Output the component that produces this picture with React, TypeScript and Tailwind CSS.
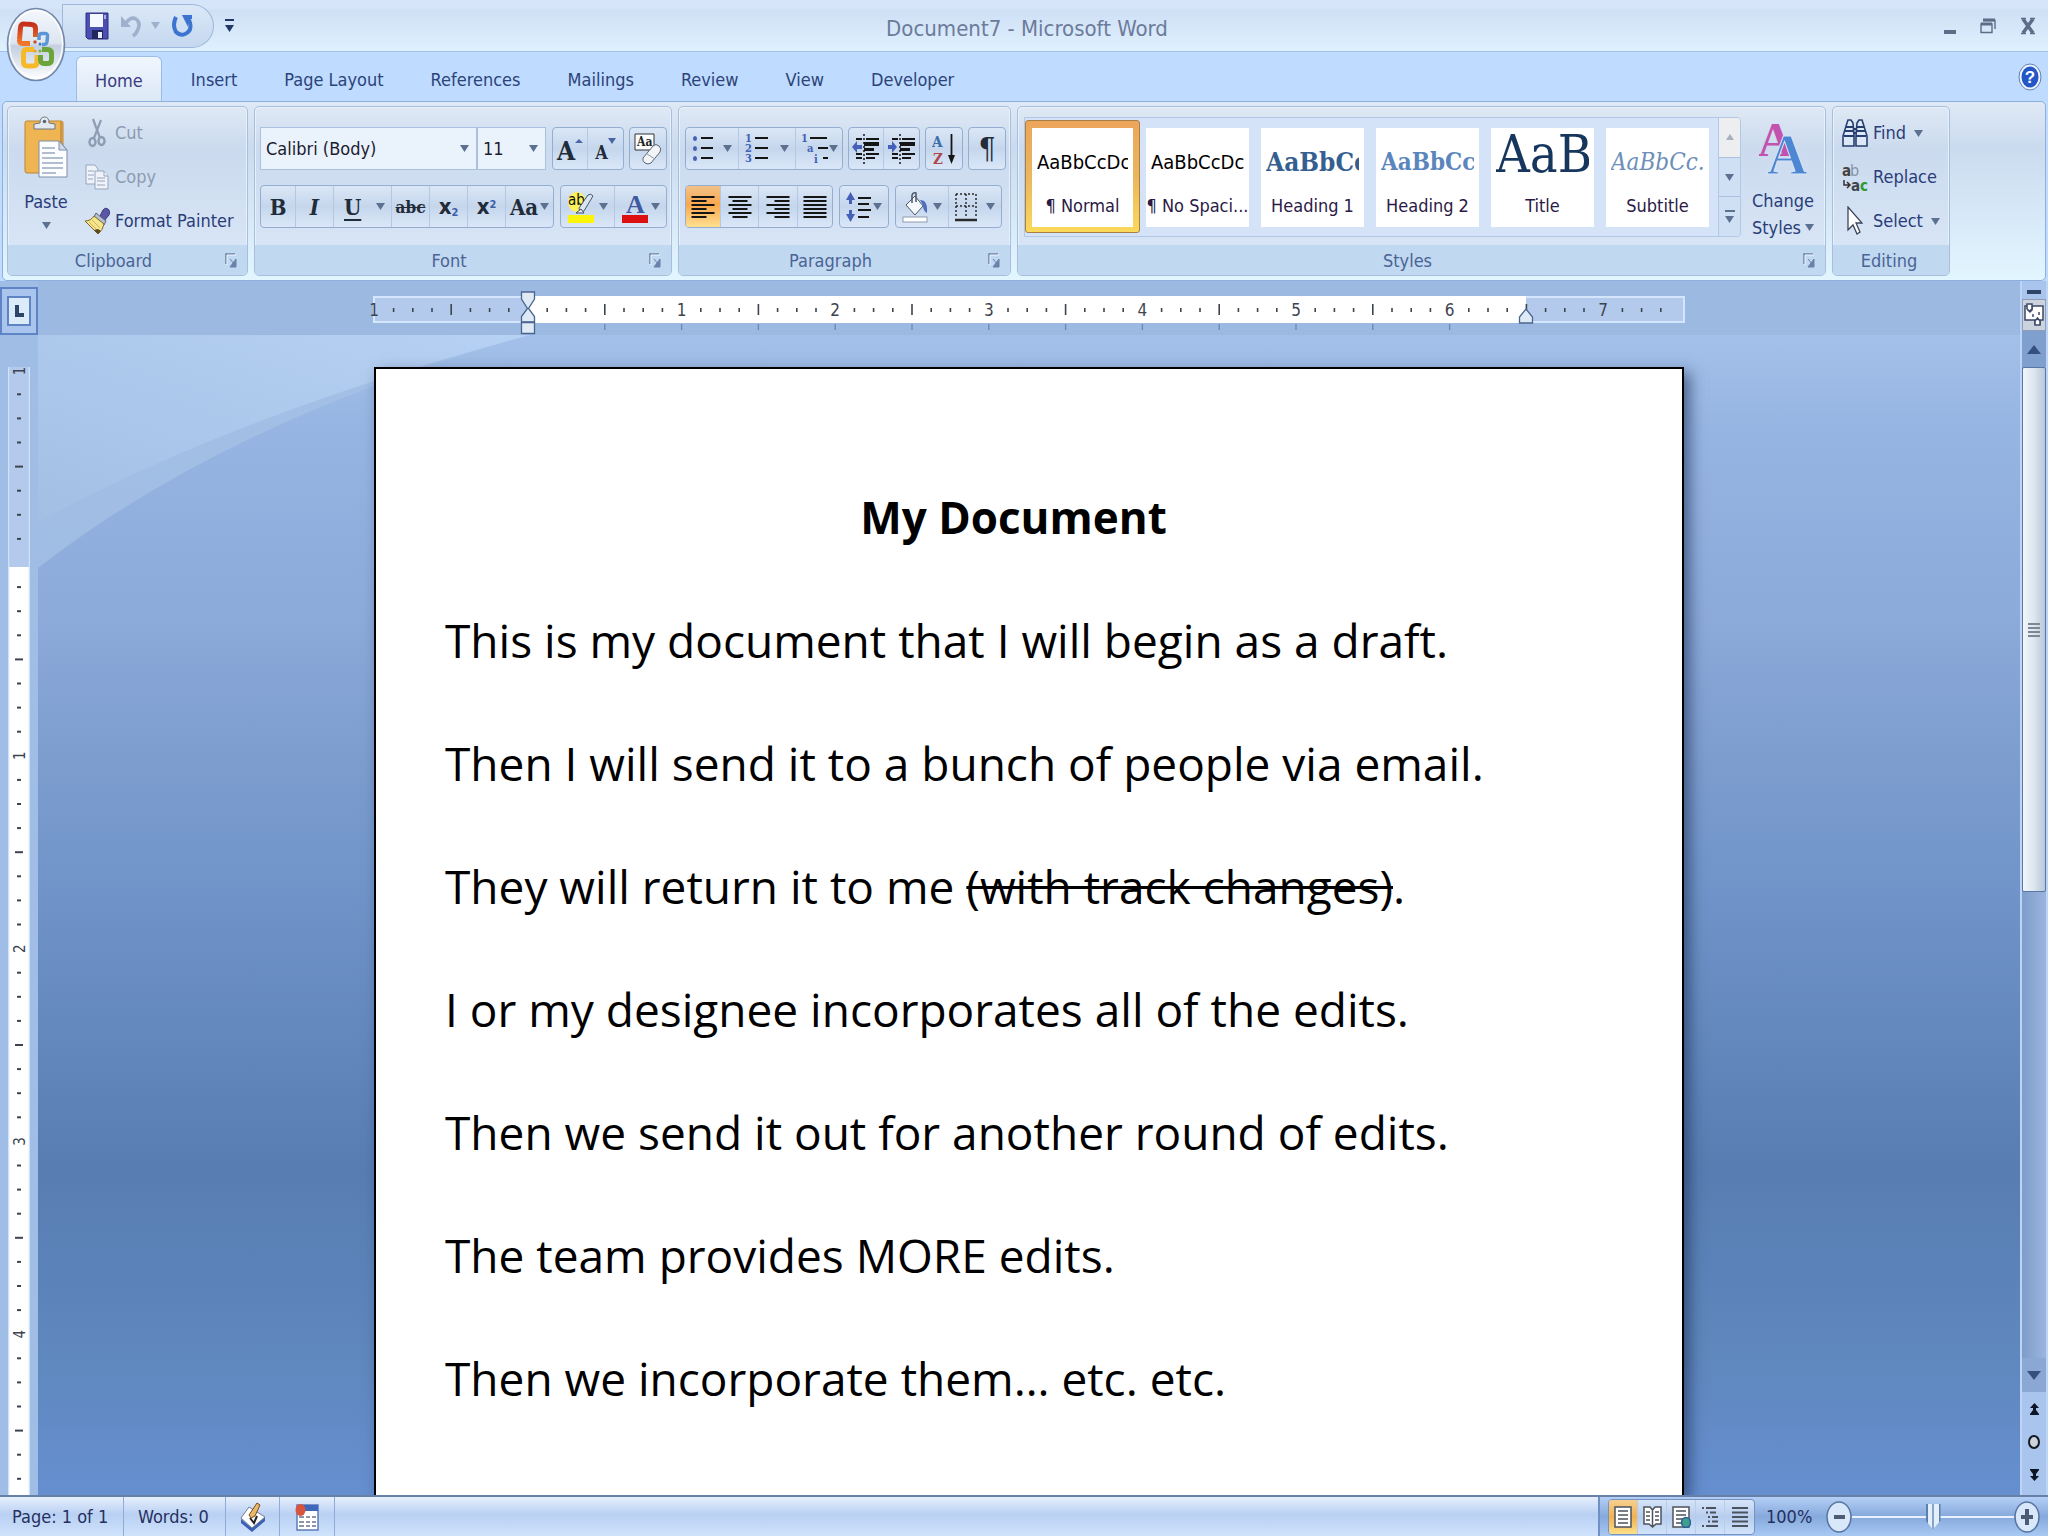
import { useState } from 'react';
import type { ReactNode } from 'react';
import clsx from 'clsx';

const TABS = ['Home', 'Insert', 'Page Layout', 'References', 'Mailings', 'Review', 'View', 'Developer'];

const PARAGRAPHS = [
  'This is my document that I will begin as a draft.',
  'Then I will send it to a bunch of people via email.',
  null,
  'I or my designee incorporates all of the edits.',
  'Then we send it out for another round of edits.',
  'The team provides MORE edits.',
  'Then we incorporate them… etc. etc.',
];

const STYLES = [
  { name: '¶ Normal', sample: 'AaBbCcDc', look: 'text-[20px] text-black' },
  { name: '¶ No Spaci...', sample: 'AaBbCcDc', look: 'text-[20px] text-black' },
  { name: 'Heading 1', sample: 'AaBbCc', look: 'text-[26px] font-bold text-[#365f91]' },
  { name: 'Heading 2', sample: 'AaBbCc', look: 'text-[24px] font-bold text-[#5b86bd]' },
  { name: 'Title', sample: 'AaB', look: 'text-[52px] text-[#17365d]' },
  { name: 'Subtitle', sample: 'AaBbCc.', look: 'text-[24px] italic text-[#6d8fb8]' },
];

const SERIF = "font-['DejaVu_Serif_Condensed','DejaVu_Serif',serif]";

function Caret({ className = 'text-[#5c7090]' }: { className?: string }) {
  return (
    <svg className={clsx('h-[7px] w-[9px] shrink-0', className)} viewBox="0 0 9 7" aria-hidden="true">
      <path d="M0 0h9L4.5 7z" fill="currentColor" />
    </svg>
  );
}

function OfficeLogo() {
  return (
    <svg className="h-[76px] w-[60px]" viewBox="0 0 60 76" aria-hidden="true">
      <defs>
        <linearGradient id="orb" x1="0" y1="0" x2="0" y2="1">
          <stop offset="0" stopColor="#f4f8fd" />
          <stop offset=".48" stopColor="#dde5f0" />
          <stop offset=".52" stopColor="#c3cfe0" />
          <stop offset="1" stopColor="#ffffff" />
        </linearGradient>
        <linearGradient id="red" x1="0" y1="0" x2="0" y2="1">
          <stop offset="0" stopColor="#c4301a" />
          <stop offset="1" stopColor="#f0782a" />
        </linearGradient>
      </defs>
      <ellipse cx="30" cy="38.5" rx="28.5" ry="36" fill="url(#orb)" stroke="#7388a8" strokeWidth="1.6" />
      <ellipse cx="30" cy="38" rx="26.5" ry="33.5" fill="none" stroke="#fff" strokeWidth="1.5" opacity=".8" />
      <g fill="none" strokeWidth="5" strokeLinejoin="round">
        <path d="M24 37.500h-7.500q-3.500 0-3-4l1-12q.5-4 4-3.500l7 .5q4 .5 4 4V31" stroke="url(#red)" />
        <path d="M33 34v-3.500q0-3 3-3h3q3 0 2.500 3l-.5 5q-.5 3-3 3h-2" stroke="#5b97d6" strokeWidth="3.500" />
        <path d="M28 43.500h-7.500q-3 0-3 4v8.500q0 4 4 4h5.500q4 0 4-4V49" stroke="#f6b92b" />
        <path d="M36 43.500h5.500q4 0 4 4v6q0 4-3.500 4H38q-3.500 0-3.500-4V49" stroke="#6aa43a" />
      </g>
      <circle cx="29" cy="36" r="1.8" fill="#c9542c" />
      <circle cx="34" cy="38" r="1.5" fill="#3d7cc4" />
      <circle cx="29" cy="45" r="1.6" fill="#e8a01f" />
      <circle cx="34" cy="45" r="1.6" fill="#7db33f" />
    </svg>
  );
}

function SaveIcon() {
  return (
    <svg className="h-7 w-6" viewBox="0 0 24 28" aria-hidden="true">
      <path d="M1 1h22v26H3l-2-2z" fill="#4a4fb0" stroke="#2c2f7d" />
      <path d="M5 2h13v13H5z" fill="#f3f7ff" />
      <path d="M7 18h11v9H7z" fill="#23275f" />
      <path d="M13 20h4v6h-4z" fill="#e8eefb" />
      <path d="M19 3h2v4h-2z" fill="#a9acec" />
    </svg>
  );
}

function UndoIcon() {
  return (
    <svg className="h-6 w-[22px]" viewBox="0 0 22 24" fill="none" aria-hidden="true">
      <path d="M1 2v11h10z" fill="#9eb0cc" />
      <path d="M6 9q5-7 10-4 5 4 2 10-1 4-5 7" stroke="#9eb0cc" strokeWidth="3.500" />
    </svg>
  );
}

function RedoIcon() {
  return (
    <svg className="h-6 w-[22px]" viewBox="0 0 22 24" fill="none" aria-hidden="true">
      <path d="M4 3Q0 11 4 18q4 4 9 2 7-3 5-11 0-2-2-4" stroke="#3d74cf" strokeWidth="4" />
      <path d="M10 1h10v4h-4v8z" fill="#3d74cf" />
    </svg>
  );
}

function PasteIcon() {
  return (
    <svg className="h-[62px] w-[46px]" viewBox="0 0 46 62" aria-hidden="true">
      <rect x="2" y="5" width="38" height="52" rx="2" fill="#f0b553" stroke="#b98537" />
      <path d="M38 6v51" stroke="#cf953c" strokeWidth="2" />
      <path d="M11 13V8l6-1q0-6 4.500-6T26 7l6 1v5z" fill="#e4e9ef" stroke="#6c7683" />
      <circle cx="21.5" cy="5.5" r="1.8" fill="#5c6674" />
      <path d="M16 25h20l8 9v27H16z" fill="#fbfdff" stroke="#7c8ea8" />
      <path d="M36 25v9h8z" fill="#cfdaea" stroke="#7c8ea8" />
      <path d="M19 32h13M19 37h13M19 42h21M19 47h21M19 52h21M19 57h14" stroke="#9aa9c0" strokeWidth="1.4" />
    </svg>
  );
}

function CutIcon() {
  return (
    <svg className="h-[30px] w-[18px]" viewBox="0 0 18 30" fill="none" stroke="#8f9db3" aria-hidden="true">
      <path d="M5 1l7 19M13 2L6 20" strokeWidth="2.2" />
      <ellipse cx="4.5" cy="24" rx="3" ry="4" strokeWidth="2.4" />
      <ellipse cx="13.5" cy="23" rx="3" ry="4" strokeWidth="2.4" />
    </svg>
  );
}

function CopyIcon() {
  return (
    <svg className="h-[26px] w-6" viewBox="0 0 24 26" fill="#eff3f9" stroke="#97a5bb" aria-hidden="true">
      <path d="M1 1h9l3 4v15H1z" />
      <path d="M3 7h6M3 11h6M3 15h5" />
      <path d="M10 7h9l4 5v13H10z" />
      <path d="M19 7v5h4M12 14h8M12 17h8M12 21h8" />
    </svg>
  );
}

function PainterIcon() {
  return (
    <svg className="h-7 w-[26px]" viewBox="0 0 26 28" aria-hidden="true">
      <path d="M16 9l3-6q2-3 5-1t1 6l-5 6z" fill="#5a57a8" stroke="#3a3878" />
      <path d="M12 6l10 8-2 4-10-8z" fill="#b7bfd0" stroke="#5b6375" />
      <path d="M10 9l10 8q-1 6-6 10L1 14q6 0 9-5z" fill="#f5e58e" stroke="#7d6828" />
      <path d="M5 15l9 9M8 13l8 8" stroke="#d3b74e" />
      <path d="M10 23l4 4 3-3-3-2z" fill="#5c4a20" />
    </svg>
  );
}

function LauncherIcon() {
  return (
    <svg className="h-[15px] w-3" viewBox="0 0 12 15" fill="none" aria-hidden="true">
      <path d="M1 11V1h9" stroke="#6a82a8" strokeWidth="1.5" />
      <path d="M5 6l5 6M11 6v8H5z" stroke="#6a82a8" fill="#6a82a8" />
      <path d="M2 12V2h9" stroke="#fff" strokeWidth=".8" />
    </svg>
  );
}

function EraseIcon() {
  return (
    <svg className="h-8 w-7" viewBox="0 0 28 32" aria-hidden="true">
      <path d="M1 1h19v16H1z" fill="#fdfeff" stroke="#333" />
      <text x="3" y="13" fontSize="12" fontWeight="700" fontFamily="DejaVu Serif Condensed" fill="#222">Aa</text>
      <path d="M9 25L19 13q3-3 6 0t1 6L17 30q-3 2-6 0t-2-5z" fill="#f2f4f8" stroke="#5c6573" />
      <path d="M13 21l8 5" stroke="#8d97a8" />
    </svg>
  );
}

function BulletsIcon() {
  return (
    <svg className="h-[30px] w-[22px]" viewBox="0 0 22 30" aria-hidden="true">
      {[4, 14, 24].map((y) => (
        <g key={y}>
          <ellipse cx="3" cy={y + 0.5} rx="2" ry="2.5" fill="#4560b8" />
          <path d={`M9 ${y}h12`} stroke="#151515" strokeWidth="2" />
        </g>
      ))}
    </svg>
  );
}

function NumberingIcon() {
  return (
    <svg className="h-[30px] w-6" viewBox="0 0 24 30" aria-hidden="true">
      {[1, 2, 3].map((n) => (
        <g key={n}>
          <text x="0" y={n * 10 - 2} fontSize="11" fontWeight="700" fontFamily="DejaVu Serif Condensed" fill="#4560b8">{n}</text>
          <path d={`M10 ${n * 10 - 6}h13`} stroke="#151515" strokeWidth="2" />
        </g>
      ))}
    </svg>
  );
}

function MultilevelIcon() {
  return (
    <svg className="h-8 w-7" viewBox="0 0 28 32" aria-hidden="true">
      <g fontSize="11" fontWeight="700" fontFamily="DejaVu Serif Condensed" fill="#4560b8">
        <text x="0" y="9">1</text>
        <text x="6" y="19">a</text>
        <text x="13" y="30">i</text>
      </g>
      <path d="M9 5h17M17 15h10M22 25h5" stroke="#151515" strokeWidth="2" />
    </svg>
  );
}

function IndentIcon({ more }: { more?: boolean }) {
  return (
    <svg className="h-8 w-7" viewBox="0 0 28 32" aria-hidden="true">
      <path d="M4 6h6M14 6h13M4 21h6M14 21h13M4 25h6M14 25h9" stroke="#151515" strokeWidth="2" />
      <path d="M12 9h15v4H12zM12 15h10v3H12z" fill="#151515" />
      <path d="M12 1v30" stroke="#151515" strokeWidth="1.5" strokeDasharray="2 2" />
      <path d={more ? 'M9 14L4 8v4H0v4h4v4z' : 'M0 14l5-6v4h5v4H5v4z'} fill="#4560b8" />
    </svg>
  );
}

function SortIcon() {
  return (
    <svg className="h-8 w-6" viewBox="0 0 24 32" aria-hidden="true">
      <text x="0" y="14" fontSize="15" fontWeight="700" fontFamily="DejaVu Serif Condensed" fill="#3a6fa8">A</text>
      <text x="1" y="31" fontSize="15" fontWeight="700" fontFamily="DejaVu Serif Condensed" fill="#b0464c">Z</text>
      <path d="M19.5 1v24" stroke="#151515" strokeWidth="1.8" />
      <path d="M16 22h7l-3.500 9z" fill="#151515" />
    </svg>
  );
}

function AlignIcon({ kind }: { kind: 'left' | 'center' | 'right' | 'justify' }) {
  return (
    <svg className="h-6 w-6" viewBox="0 0 24 24" stroke="#151515" strokeWidth="2" aria-hidden="true">
      {[23, 15, 23, 15, 23, 15].map((full, i) => {
        const w = kind === 'justify' ? 23 : full;
        const x = kind === 'right' ? 23.5 - w : kind === 'center' ? (24 - w) / 2 : 0.5;
        return <path key={i} d={`M${x} ${i * 4 + 2}h${w}`} />;
      })}
    </svg>
  );
}

function SpacingIcon() {
  return (
    <svg className="h-8 w-[26px]" viewBox="0 0 26 32" aria-hidden="true">
      <path d="M0 9l4.500-8L9 9H6v4H3V9zM0 23l4.500 8L9 23H6v-4H3v4z" fill="#4560b8" />
      <path d="M12 7h13M12 13h11M12 19h13M12 26h11" stroke="#151515" strokeWidth="2" />
    </svg>
  );
}

function ShadingIcon() {
  return (
    <svg className="h-8 w-7" viewBox="0 0 28 32" aria-hidden="true">
      <path d="M4 14l9-9 8 10-8 9z" fill="#f5f8fc" stroke="#4a5668" />
      <path d="M10 12V4q1-3 4-2v9" fill="none" stroke="#4a5668" strokeWidth="1.5" />
      <path d="M18 9q8 0 7 13-4-2-4-8z" fill="#4d6dbd" />
      <rect x="1" y="26" width="24" height="5" fill="#fff" stroke="#8f9cb0" />
    </svg>
  );
}

function BordersIcon() {
  return (
    <svg className="h-[30px] w-[22px]" viewBox="0 0 22 30" stroke="#2a2a2a" aria-hidden="true">
      <path d="M1 2h20M1 14h20M1 2v24M11 2v24M21 2v24" strokeWidth="1.5" strokeDasharray="2 2" />
      <path d="M0 28h22" strokeWidth="2.5" />
    </svg>
  );
}

function HighlightIcon() {
  return (
    <svg className="h-8 w-7" viewBox="0 0 28 32" aria-hidden="true">
      <ellipse cx="10" cy="11" rx="9" ry="10" fill="#fdf25a" />
      <text x="1" y="14" fontSize="15" fontFamily="DejaVu Sans Condensed" fill="#111">ab</text>
      <path d="M12 17L21 4q3-2 5 1L17 20l-4 1z" fill="#dbe5f2" stroke="#3e5876" />
      <path d="M9 22h8l-3-4z" fill="#e8edf5" stroke="#3e4c5e" />
      <path d="M1 24h26v8H1z" fill="#fbf50c" />
    </svg>
  );
}

function FontColorIcon() {
  return (
    <svg className="h-8 w-7" viewBox="0 0 28 32" aria-hidden="true">
      <text x="5" y="22" fontSize="26" fontWeight="700" fontFamily="Liberation Serif" fill="#3f5aa0">A</text>
      <path d="M1 24h26v8H1z" fill="#dc1010" />
    </svg>
  );
}

function ChangeStylesIcon() {
  return (
    <svg className="h-[58px] w-12" viewBox="0 0 48 58" aria-hidden="true">
      <g fontFamily="Liberation Serif" fontWeight="700">
        <text x="-1" y="38" fontSize="48" fill="#c252ae">A</text>
        <text x="8" y="56" fontSize="56" fill="#4d86d3" stroke="#d5e3f6" strokeWidth="1">A</text>
      </g>
    </svg>
  );
}

function FindIcon() {
  return (
    <svg className="h-7 w-[26px]" viewBox="0 0 26 28" fill="#dbe8f8" stroke="#263f70" strokeWidth="1.6" aria-hidden="true">
      <path d="M5 4l1-3h3l2 3 1 13v10H1V17z" />
      <path d="M15 4l2-3h3l1 3 4 13v10H14V17z" />
      <path d="M4 8h7M3 12h8M2 17h10M15 8h7M15 12h8M14 17h10M11 10h4M11 14h4" strokeWidth="2" />
    </svg>
  );
}

function ReplaceIcon() {
  return (
    <svg className="h-[30px] w-[26px]" viewBox="0 0 26 30" fontFamily="DejaVu Sans Condensed" fontWeight="700" aria-hidden="true">
      <text x="0" y="14" fontSize="15" fill="#444">a</text>
      <text x="8" y="14" fontSize="16" fontWeight="400" fill="#8793a5">b</text>
      <text x="9" y="29" fontSize="15" fill="#3c4652">a</text>
      <text x="18" y="29" fontSize="15" fill="#2e9a2e">c</text>
      <path d="M2 18v5h5M5 20l3 3-3 3" fill="none" stroke="#333" strokeWidth="1.5" />
    </svg>
  );
}

function SelectIcon() {
  return (
    <svg className="h-[30px] w-4" viewBox="0 0 16 30" aria-hidden="true">
      <path d="M1 1v23l5-5 4 9 3-2-4-9h6z" fill="#fff" stroke="#3b4558" strokeWidth="1.3" />
    </svg>
  );
}

function RibbonGroup({ label, launcher = true, className, children }: { label: string; launcher?: boolean; className?: string; children: ReactNode }) {
  return (
    <section
      aria-label={label}
      className={clsx('flex shrink-0 flex-col overflow-hidden rounded-[5px] border border-[#a7bfdd] bg-linear-to-b from-[#dfe9f5] via-[#cbdaee] via-25% to-[#dbe8f8] shadow-[inset_0_0_0_1px_#e8f1fb]', className)}
    >
      <div className="flex flex-1">{children}</div>
      <div className="flex h-[30px] items-center bg-[#c1d8f1] pt-px pr-1 text-[#4a6494]">
        <span className="flex-1 text-center">{label}</span>
        {launcher && (
          <button aria-label={`${label} options`} className="flex w-6 justify-center">
            <LauncherIcon />
          </button>
        )}
      </div>
    </section>
  );
}

function ToolGroup({ children }: { children: ReactNode }) {
  return (
    <div className="flex h-[43px] divide-x divide-[#b3c8e4] overflow-hidden rounded-[4px] border border-[#94aed2] bg-linear-to-b from-[#dbe7f6] via-[#c5d6ec] via-50% to-[#dae7f8]">
      {children}
    </div>
  );
}

function Tool({ label, className, menu, pressed, children }: { label: string; className?: string; menu?: boolean; pressed?: boolean; children: ReactNode }) {
  return (
    <button
      aria-label={label}
      aria-pressed={pressed}
      className={clsx('flex items-center text-[#222b38]', menu ? 'justify-between px-[6px]' : 'justify-center', pressed && 'bg-linear-to-b from-[#f3c188] via-[#f9a74b] via-45% to-[#fde08f]', className)}
    >
      {children}
      {menu && <Caret />}
    </button>
  );
}

function SmallButton({ icon, menu, disabled, children }: { icon: ReactNode; menu?: boolean; disabled?: boolean; children: ReactNode }) {
  return (
    <button disabled={disabled} className={clsx('flex h-11 items-center whitespace-nowrap', disabled ? 'text-[#8d9bb2]' : 'text-[#2a3d78]')}>
      <span className="mr-1 flex w-7 justify-center">{icon}</span>
      {children}
      {menu && <span className="ml-2"><Caret /></span>}
    </button>
  );
}

function TitleBar() {
  return (
    <header className="flex h-[52px] shrink-0 items-center border-b border-[#a3c0e6] bg-linear-to-b from-[#d7e5fb] from-15% via-[#cfe0f5] via-20% to-[#dff0ff]">
      <div className="flex w-[300px] items-center pl-[62px]">
        <div className="flex h-11 w-[152px] items-center rounded-r-full rounded-tl-[24px] border border-[#9db8dc] bg-linear-to-b from-[#dbe8f8] to-[#c5d8ef] pl-[22px]">
          <button aria-label="Save"><SaveIcon /></button>
          <button aria-label="Undo" className="ml-[11px] flex items-center gap-[9px]">
            <UndoIcon />
            <Caret className="text-[#9eb0cc]" />
          </button>
          <button aria-label="Redo" className="ml-[12px]"><RedoIcon /></button>
        </div>
        <button aria-label="Customize Quick Access Toolbar" className="ml-[11px] flex flex-col items-center gap-1">
          <span className="h-[2px] w-[9px] bg-[#22386a]" />
          <Caret className="text-[#22386a]" />
        </button>
      </div>
      <h1 className="flex-1 pt-[6px] text-center text-[22px] text-[#6c7b99]">Document7 - Microsoft Word</h1>
      <div className="flex w-[294px] items-center justify-end gap-6 pr-3 text-[#5d6d88]">
        <button aria-label="Minimize" className="flex h-4 w-3 items-end"><span className="h-1 w-3 bg-[#5d6d88]" /></button>
        <button aria-label="Restore">
          <svg className="h-4 w-4" viewBox="0 0 16 16" fill="none" stroke="currentColor" aria-hidden="true">
            <path d="M3 2.500h12V11M1 6h11v8.500H1z" strokeWidth="1.4" />
            <path d="M3 2h12M1 6h11" strokeWidth="3" />
          </svg>
        </button>
        <button aria-label="Close">
          <svg className="h-[18px] w-4" viewBox="0 0 16 18" stroke="currentColor" aria-hidden="true">
            <path d="M3 2l10 14M13 2L3 16" strokeWidth="3.5" />
            <path d="M1 1.500h5M10 1.500h5M1 16.500h5M10 16.500h5" strokeWidth="1.5" />
          </svg>
        </button>
      </div>
    </header>
  );
}

function TabBar() {
  const [active, setActive] = useState('Home');
  return (
    <nav className="flex h-[49px] shrink-0 items-end bg-[#bfdbff] pr-[6px] pl-[76px]">
      <div className="flex flex-1 gap-[11px]">
        {TABS.map((tab) => (
          <button
            key={tab}
            onClick={() => setActive(tab)}
            className={clsx('h-[45px] rounded-t-[6px] px-[18px] pt-[3px]', tab === active ? 'border border-b-0 border-[#9dbbe3] bg-linear-to-b from-[#f0f6fe] to-[#dce8f6] text-[#3b3b80]' : 'text-[#2c4379]')}
          >
            {tab}
          </button>
        ))}
      </div>
      <button aria-label="Help" className="mb-[10px]">
        <svg className="h-7 w-6" viewBox="0 0 24 28" aria-hidden="true">
          <ellipse cx="12" cy="14" rx="11" ry="13" fill="#eef5ff" stroke="#5f7fb5" />
          <ellipse cx="12" cy="14" rx="8.5" ry="10.5" fill="#2456c8" />
          <text x="12" y="20" fontSize="17" fontWeight="700" textAnchor="middle" fontFamily="Liberation Sans" fill="#fff">?</text>
        </svg>
      </button>
    </nav>
  );
}

function ClipboardGroup() {
  return (
    <RibbonGroup label="Clipboard" className="w-[241px]">
      <button className="ml-[14px] flex w-[48px] flex-col items-center pt-[9px] text-[#2a3d78]">
        <PasteIcon />
        <span className="mt-[12px] leading-6">Paste</span>
        <span className="mt-[8px]"><Caret /></span>
      </button>
      <div className="ml-[13px] flex flex-col pt-1">
        <SmallButton icon={<CutIcon />} disabled>Cut</SmallButton>
        <SmallButton icon={<CopyIcon />} disabled>Copy</SmallButton>
        <SmallButton icon={<PainterIcon />}>Format Painter</SmallButton>
      </div>
    </RibbonGroup>
  );
}

function Combo({ label, value, className }: { label: string; value: string; className: string }) {
  return (
    <div className={clsx('relative h-[43px] border border-[#a9c0de] bg-[#eaf2fc]', className)}>
      <select aria-label={label} className="h-full w-full appearance-none bg-transparent pl-[5px] text-[#1c1c2e] outline-none">
        <option>{value}</option>
      </select>
      <span className="pointer-events-none absolute top-[17px] right-[7px] flex"><Caret /></span>
    </div>
  );
}

function FontGroup() {
  return (
    <RibbonGroup label="Font" className="w-[418px]">
      <div className="flex flex-col gap-[15px] px-[5px] pt-5">
        <div className="flex">
          <Combo label="Font name" value="Calibri (Body)" className="w-[217px]" />
          <Combo label="Font size" value="11" className="mr-[6px] w-[69px]" />
          <ToolGroup>
            <Tool label="Grow font" className="w-[35px]">
              <span className={clsx(SERIF, 'pt-1 text-[26px] font-bold')}>A</span>
              <svg className="mb-4 h-1 w-2" viewBox="0 0 8 4" aria-hidden="true"><path d="M0 4h8L4 0z" fill="#4a66a5" /></svg>
            </Tool>
            <Tool label="Shrink font" className="w-[35px]">
              <span className={clsx(SERIF, 'pt-2 text-[18px] font-bold')}>A</span>
              <svg className="mb-4 h-[6px] w-2" viewBox="0 0 8 6" aria-hidden="true"><path d="M0 0h8L4 6z" fill="#4a66a5" /></svg>
            </Tool>
          </ToolGroup>
          <div className="ml-[5px]">
            <ToolGroup><Tool label="Clear formatting" className="w-[36px]"><EraseIcon /></Tool></ToolGroup>
          </div>
        </div>
        <div className={clsx('flex gap-[6px] text-[22px]', SERIF)}>
          <ToolGroup>
            <Tool label="Bold" className="w-[35px] font-bold">B</Tool>
            <Tool label="Italic" className="w-[38px] font-bold italic">I</Tool>
            <Tool label="Underline" menu className="w-[58px] font-bold"><span className="pl-1 underline underline-offset-4">U</span></Tool>
            <Tool label="Strikethrough" className="w-[38px] text-[17px] font-bold"><s>abc</s></Tool>
            <Tool label="Subscript" className="w-[38px] font-['DejaVu_Sans_Condensed'] font-bold"><span>x<sub className="text-[11px] text-[#3c5fa8]">2</sub></span></Tool>
            <Tool label="Superscript" className="w-[38px] font-['DejaVu_Sans_Condensed'] font-bold"><span>x<sup className="text-[11px] text-[#3c5fa8]">2</sup></span></Tool>
            <Tool label="Change case" className="w-[47px] gap-[2px] font-bold"><span>Aa</span><Caret /></Tool>
          </ToolGroup>
          <ToolGroup>
            <Tool label="Highlight" menu className="w-[54px]"><HighlightIcon /></Tool>
            <Tool label="Font color" menu className="w-[51px]"><FontColorIcon /></Tool>
          </ToolGroup>
        </div>
      </div>
    </RibbonGroup>
  );
}

function ParagraphGroup() {
  return (
    <RibbonGroup label="Paragraph" className="w-[333px]">
      <div className="flex flex-col gap-[15px] px-[6px] pt-5">
        <div className="flex gap-[5px]">
          <ToolGroup>
            <Tool label="Bullets" menu className="w-[53px]"><BulletsIcon /></Tool>
            <Tool label="Numbering" menu className="w-[57px]"><NumberingIcon /></Tool>
            <Tool label="Multilevel list" className="w-[46px]"><MultilevelIcon /><Caret /></Tool>
          </ToolGroup>
          <ToolGroup>
            <Tool label="Decrease indent" className="w-[35px]"><IndentIcon /></Tool>
            <Tool label="Increase indent" className="w-[35px]"><IndentIcon more /></Tool>
          </ToolGroup>
          <ToolGroup><Tool label="Sort" className="w-[36px]"><SortIcon /></Tool></ToolGroup>
          <ToolGroup><Tool label="Show marks" className={clsx('w-[36px] text-[30px]', SERIF)}>¶</Tool></ToolGroup>
        </div>
        <div className="flex gap-[6px]">
          <ToolGroup>
            <Tool label="Align left" pressed className="w-[35px]"><AlignIcon kind="left" /></Tool>
            <Tool label="Center" className="w-[38px]"><AlignIcon kind="center" /></Tool>
            <Tool label="Align right" className="w-[39px]"><AlignIcon kind="right" /></Tool>
            <Tool label="Justify" className="w-[34px]"><AlignIcon kind="justify" /></Tool>
          </ToolGroup>
          <ToolGroup><Tool label="Line spacing" menu className="w-[48px]"><SpacingIcon /></Tool></ToolGroup>
          <ToolGroup>
            <Tool label="Shading" menu className="w-[53px]"><ShadingIcon /></Tool>
            <Tool label="Borders" menu className="w-[52px]"><BordersIcon /></Tool>
          </ToolGroup>
        </div>
      </div>
    </RibbonGroup>
  );
}

function StylesGroup() {
  return (
    <RibbonGroup label="Styles" className="w-[809px]">
      <div className="mt-[10px] ml-[6px] flex h-[120px] overflow-hidden rounded-r-[4px] border border-[#b3c8e4] bg-[#d4e3f7]">
        <div className="flex">
          {STYLES.map((style, i) => (
            <button
              key={style.name}
              className={clsx('mt-[2px] h-[113px] w-[115px] p-[6px] pt-[7px]', i === 0 && 'rounded-[3px] border border-[#a87f45] bg-linear-to-b from-[#eda55b] via-[#e9b65e] to-[#fbd95a] p-[5px] pt-[6px]')}
            >
              <span className="flex h-[99px] flex-col overflow-hidden bg-white">
                <span className="mx-[5px] flex h-[58px] items-end justify-start overflow-hidden">
                  <span className={clsx('whitespace-nowrap', i > 1 && SERIF, i === 4 ? 'leading-[64px]' : 'leading-[48px]', style.look)}>{style.sample}</span>
                </span>
                <span className="mt-[8px] text-center leading-6 whitespace-nowrap text-[#2b1a45]">{style.name}</span>
              </span>
            </button>
          ))}
        </div>
        <div className="ml-[3px] flex w-[22px] flex-col divide-y divide-[#a9c0de] border-l border-[#b3c8e4]">
          <button aria-label="Previous styles" className="flex flex-1 items-center justify-center bg-[#eceef0]">
            <svg className="h-[6px] w-2" viewBox="0 0 8 6" aria-hidden="true"><path d="M0 6h8L4 0z" fill="#a9b1bd" /></svg>
          </button>
          <button aria-label="Next styles" className="flex flex-1 items-center justify-center bg-[#cfdff4]"><Caret /></button>
          <button aria-label="More styles" className="flex flex-1 flex-col items-center justify-center gap-1 bg-[#cfdff4]">
            <span className="h-[2px] w-[10px] bg-[#5c7090]" />
            <Caret />
          </button>
        </div>
      </div>
      <button className="flex flex-1 flex-col items-center pt-[11px] text-[#2a3d78]">
        <ChangeStylesIcon />
        <span className="mt-[11px] leading-[27px]">Change</span>
        <span className="flex items-center gap-1 leading-[27px]">Styles <Caret /></span>
      </button>
    </RibbonGroup>
  );
}

function EditingGroup() {
  return (
    <RibbonGroup label="Editing" launcher={false} className="w-[118px]">
      <div className="ml-[8px] flex flex-col pt-1">
        <SmallButton icon={<FindIcon />} menu>Find</SmallButton>
        <SmallButton icon={<ReplaceIcon />}>Replace</SmallButton>
        <SmallButton icon={<SelectIcon />} menu>Select</SmallButton>
      </div>
    </RibbonGroup>
  );
}

function HorizontalRuler() {
  const ticks = Array.from({ length: 67 }, (_, i) => i - 7);
  return (
    <svg className="h-[44px] w-[1320px] shrink-0" viewBox="-5 0 1320 44" aria-hidden="true">
      <rect x="0" y="6" width="1310" height="25" fill="#b3caec" stroke="#d3e6fb" strokeWidth="2" />
      <rect x="154" y="5" width="998" height="27" fill="#fff" />
      {ticks.map((i) => {
        const x = 154 + i * 19.2;
        if (i === 0) return null;
        if (i % 8 === 0) return <text key={i} x={x} y="25" fontSize="17" textAnchor="middle" fontFamily="DejaVu Sans Condensed" fill="#3d4450">{i / 8}</text>;
        return <path key={i} d={i % 4 === 0 ? `M${x} 13v11` : `M${x} 17v4`} stroke="#3d4450" strokeWidth="1.6" />;
      })}
      <text x="0" y="25" fontSize="17" textAnchor="middle" fontFamily="DejaVu Sans Condensed" fill="#3d4450">1</text>
      {Array.from({ length: 12 }, (_, i) => (
        <path key={i} d={`M${154 + (i + 1) * 76.8} 33v6`} stroke="#6b87b5" strokeWidth="1.3" />
      ))}
      <g fill="#dfeaf7" stroke="#4b658f" strokeWidth="1.3">
        <path d="M147.500 1h13v7l-6 9.500 6 8V31h-13v-5.500l6-8-6-9.500z" />
        <path d="M147.500 31.500h13v11h-13z" />
        <path d="M1145.500 32v-6l6.500-8 6.500 8v6z" />
      </g>
    </svg>
  );
}

function VerticalRuler() {
  return (
    <svg className="h-[1128px] w-[22px]" viewBox="0 0 22 1128" aria-hidden="true">
      <rect width="22" height="1128" fill="#fff" />
      <rect x="1" y="0" width="20" height="200" fill="#b3caec" />
      <path d="M.5 0v1128M21.500 0v1128" stroke="#cfe2fa" strokeWidth="1.5" />
      {Array.from({ length: 47 }, (_, n) => n - 7).map((i) => {
        if (i === 0) return null;
        const y = 196 + i * 24.1;
        if (i % 8 === 0) return <text key={i} x="0" y="0" transform={`translate(17 ${y}) rotate(-90)`} fontSize="15" textAnchor="middle" fontFamily="DejaVu Sans Condensed" fill="#3d4450">{i / 8}</text>;
        return <path key={i} d={i % 4 === 0 ? `M7 ${y}h8` : `M9 ${y}h4`} stroke="#3d4450" strokeWidth="2" />;
      })}
      <text x="0" y="0" transform="translate(17 4) rotate(-90)" fontSize="15" textAnchor="middle" fontFamily="DejaVu Sans Condensed" fill="#3d4450">1</text>
    </svg>
  );
}

function Workspace() {
  return (
    <main className="flex min-h-0 flex-1 overflow-hidden bg-[#9cb9e2]">
      <div className="flex w-[38px] shrink-0 flex-col items-center overflow-hidden bg-[#a0bde6]">
        <button aria-label="Tab selector" className="mt-[6px] flex h-[48px] w-full shrink-0 items-center justify-center border-2 border-[#5f84c6] bg-[#a9c5ee]">
          <span className="flex h-[30px] w-6 items-center justify-center border-2 border-[#5f84c6] bg-[#dcebfa]">
            <span className="h-3 w-[9px] border-b-4 border-l-4 border-[#2f4568]" />
          </span>
        </button>
        <div className="mt-[32px]"><VerticalRuler /></div>
      </div>
      <div className="flex min-w-0 flex-1 flex-col">
        <div className="flex h-[54px] shrink-0 justify-center pt-[10px]"><HorizontalRuler /></div>
        <div className="relative flex min-h-0 flex-1 justify-center overflow-hidden bg-[linear-gradient(#a2c0e9_0%,#97b5e2_8%,#8caada_24%,#7b9ccd_38%,#7094c9_48%,#587db3_72%,#5f88be_88%,#668fd0_100%)] pt-[32px]">
          <svg className="absolute top-0 left-0 h-[234px] w-[492px]" viewBox="0 0 492 234" aria-hidden="true">
            <defs>
              <linearGradient id="swoosh" x1="0" y1="1" x2="1" y2="0">
                <stop offset="0" stopColor="#a3c0e4" />
                <stop offset="1" stopColor="#b9d3f5" />
              </linearGradient>
            </defs>
            <path d="M0 0h492Q190 85 0 233z" fill="#a5c2e6" opacity=".75" />
            <path d="M0 0h492Q200 78 0 187z" fill="url(#swoosh)" opacity=".9" />
          </svg>
          <article className="relative w-[1310px] shrink-0 border-2 border-b-0 border-black bg-white pt-[87px] pr-[100px] pl-[69px] font-['Open_Sans',sans-serif] text-[46px] leading-[123px] whitespace-nowrap text-black shadow-[6px_6px_14px_rgba(30,50,90,0.65)]">
            <h2 className="text-center text-[44px] font-bold">My Document</h2>
            {PARAGRAPHS.map((text, i) => (
              <p key={i}>{text ?? <>They will return it to me <s className="decoration-[3px]">(with track changes)</s>.</>}</p>
            ))}
          </article>
        </div>
      </div>
      <div className="flex w-[28px] shrink-0 flex-col items-center border-r-2 border-l-2 border-[#bcd4f5] bg-[#a9c5ee]">
        <span className="mt-[9px] h-[4px] w-[14px] shrink-0 bg-[#2f4568]" />
        <button aria-label="View ruler" className="mt-[5px] flex h-[32px] w-full shrink-0 items-center justify-center border border-[#8e9db5] bg-[#ccd3de]">
          <svg className="h-6 w-5" viewBox="0 0 20 24" fill="#fff" stroke="#3b4a68" strokeWidth="1.5" aria-hidden="true">
            <path d="M1 3h3v4l2 2 2-2V3h11v14h-3v4h-5v-4H1z" />
            <path d="M3 1h5v5L5.500 8 3 6zM9 11v3M15 9v3M11 22v-4l2.500-3 2.500 3v4z" />
          </svg>
        </button>
        <button aria-label="Scroll up" className="flex h-[36px] w-full shrink-0 items-center justify-center bg-[#7f9fcf]">
          <svg className="h-[9px] w-[14px]" viewBox="0 0 14 9" aria-hidden="true"><path d="M0 9h14L7 0z" fill="#35507f" /></svg>
        </button>
        <div className="flex w-full flex-1 flex-col bg-linear-to-r from-[#7f9dca] to-[#9ab5de]">
          <div className="flex h-[53%] w-full flex-col items-center justify-center gap-[2px] rounded-[2px] border border-[#5b77a8] bg-linear-to-r from-[#f3f7fb] via-[#dde5ef] via-50% to-[#b9c8db]">
            {[0, 1, 2, 3].map((i) => <span key={i} className="h-[2px] w-3 bg-[#7c8794]" />)}
          </div>
        </div>
        <button aria-label="Scroll down" className="flex h-[34px] w-full shrink-0 items-center justify-center bg-[#8ba8d5]">
          <svg className="h-[9px] w-[14px]" viewBox="0 0 14 9" aria-hidden="true"><path d="M0 0h14L7 9z" fill="#35507f" /></svg>
        </button>
        <button aria-label="Previous page" className="flex h-[34px] shrink-0 items-center">
          <svg className="h-3 w-[9px]" viewBox="0 0 9 12" aria-hidden="true"><path d="M4.500 0L9 5H6v2l3 4v1H0v-1l3-4V5H0z" fill="#0c1526" /></svg>
        </button>
        <button aria-label="Select browse object" className="flex h-8 shrink-0 items-center">
          <svg className="h-[14px] w-3" viewBox="0 0 12 14" aria-hidden="true"><ellipse cx="6" cy="7" rx="5" ry="6" fill="#cdd3da" stroke="#141a24" strokeWidth="2" /></svg>
        </button>
        <button aria-label="Next page" className="mb-[3px] flex h-[34px] shrink-0 items-center">
          <svg className="h-3 w-[9px]" viewBox="0 0 9 12" aria-hidden="true"><path d="M4.500 12L9 7H6V5l3-4V0H0v1l3 4v2H0z" fill="#0c1526" /></svg>
        </button>
      </div>
    </main>
  );
}

function ProofIcon() {
  return (
    <svg className="h-[30px] w-[26px]" viewBox="0 0 26 30" aria-hidden="true">
      <path d="M1 17l11 9 13-11v4L12 30 1 21z" fill="#3b5fb5" />
      <path d="M1 16l8-11 16 10-13 11z" fill="#fff" stroke="#6f7c93" />
      <path d="M10 16l4 5 3-7" fill="none" stroke="#222" strokeWidth="2" />
      <path d="M9 13L17 1l3 2-5 11-4 2z" fill="#e8b96a" stroke="#7a4a22" />
    </svg>
  );
}

function MacroIcon() {
  return (
    <svg className="h-[28px] w-6" viewBox="0 0 24 28" aria-hidden="true">
      <path d="M2 2h21v25H2z" fill="#fff" stroke="#5d7bb8" strokeWidth="1.5" />
      <path d="M2 2h21v6H2z" fill="#3e68bd" />
      <path d="M4 14h5M11 14h4M17 14h4M4 19h5M11 19h4M17 19h4M4 23h5M11 23h4M17 23h4" stroke="#8d96a8" strokeWidth="2" />
      <ellipse cx="5.5" cy="7" rx="5" ry="6" fill="#d8543f" />
    </svg>
  );
}

function PageGlyph({ kind }: { kind: string }) {
  if (kind === 'Outline' || kind === 'Draft') {
    return (
      <svg className="h-[22px] w-[18px]" viewBox="0 0 18 22" stroke="#4c535e" strokeWidth="2" aria-hidden="true">
        {kind === 'Draft' ? <path d="M1 2h16M1 6.500h16M1 11h16M1 15.500h16M1 20h16" /> : <path d="M1 2h2M5 2h10M5 6.500h2M9 6.500h6M7 11h2M11 11h6M7 15.500h2M11 15.500h6M1 20h2M5 20h12" />}
      </svg>
    );
  }
  if (kind === 'Full Screen Reading') {
    return (
      <svg className="h-[22px] w-[19px]" viewBox="0 0 19 22" fill="#fff" stroke="#4c535e" strokeWidth="1.5" aria-hidden="true">
        <path d="M1 1h6l2.500 3L12 1h6v17h-5l-3.500 3L6 18H1zM9.500 4v17" />
        <path d="M3 6h4M3 10h4M3 14h4M12 6h4M12 10h4M12 14h4" />
      </svg>
    );
  }
  return (
    <svg className="h-[22px] w-[19px]" viewBox="0 0 19 22" fill="#fff" stroke="#4c535e" strokeWidth="1.5" aria-hidden="true">
      <path d="M1 1h16v20H1z" />
      <path d="M4 5h10M4 9h10M4 13h10M4 17h10" />
      {kind === 'Web Layout' && <ellipse cx="14" cy="16.5" rx="4.5" ry="5" fill="#3f9f8b" stroke="#2a5d9a" />}
    </svg>
  );
}

function StatusBar() {
  const [view, setView] = useState('Print Layout');
  const [zoom, setZoom] = useState(100);
  return (
    <footer className="flex h-[41px] shrink-0 items-stretch border-t-2 border-[#6780a8] bg-linear-to-b from-[#e6effc] via-[#b9d0f3] via-45% to-[#cfe3fc] text-[#26305f]">
      <div className="flex divide-x divide-[#8fabd6]">
        <span className="flex w-[124px] items-center pt-px pl-[12px]">Page: 1 of 1</span>
        <span className="flex w-[102px] items-center pt-px pl-[14px]">Words: 0</span>
        <button aria-label="Proofing errors" className="flex w-[54px] items-center justify-center"><ProofIcon /></button>
        <button aria-label="Record macro" className="flex w-[54px] items-center justify-center"><MacroIcon /></button>
      </div>
      <div className="flex-1 border-l border-[#8fabd6]" />
      <div className="flex w-[450px] items-center border-l-2 border-[#6f90c4] bg-linear-to-b from-[#b4cff5] via-[#86a9dc] via-50% to-[#a8c9f3] pl-[8px]">
        <div className="flex h-[36px] divide-x divide-[#b9cdea] overflow-hidden rounded-[4px] border border-[#7592c2] bg-linear-to-b from-[#d6e4f8] via-[#b7cdee] to-[#d2e4fb]">
          {['Print Layout', 'Full Screen Reading', 'Web Layout', 'Outline', 'Draft'].map((v) => (
            <button
              key={v}
              aria-label={v}
              onClick={() => setView(v)}
              className={clsx('flex w-[29px] items-center justify-center', v === view && 'bg-linear-to-b from-[#f6cf8e] via-[#f2b14f] to-[#fbe08a]')}
            >
              <PageGlyph kind={v} />
            </button>
          ))}
        </div>
        <span className="ml-[11px] w-[60px] pt-px">{zoom}%</span>
        <button aria-label="Zoom out" onClick={() => setZoom(Math.max(10, zoom - 10))}>
          <svg className="h-8 w-[26px]" viewBox="0 0 26 32" aria-hidden="true">
            <ellipse cx="13" cy="16" rx="12" ry="15" fill="#d8e7fa" stroke="#56749f" strokeWidth="1.5" />
            <path d="M8 16h11" stroke="#4d5c74" strokeWidth="4" />
          </svg>
        </button>
        <input
          type="range"
          aria-label="Zoom"
          min={0}
          max={200}
          value={zoom}
          onChange={(e) => setZoom(Number(e.target.value))}
          className="h-[28px] w-[162px] appearance-none bg-[linear-gradient(#e9f2fe,#e9f2fe)] bg-size-[100%_2px] bg-center bg-no-repeat [&::-webkit-slider-thumb]:h-[26px] [&::-webkit-slider-thumb]:w-[15px] [&::-webkit-slider-thumb]:appearance-none [&::-webkit-slider-thumb]:bg-[linear-gradient(90deg,#5f7fae_2px,#e3eefb_2px,#e3eefb_6px,#8aa3c8_6px,#8aa3c8_8px,#e3eefb_8px,#e3eefb_13px,#5f7fae_13px)] [&::-webkit-slider-thumb]:[clip-path:polygon(0_0,100%_0,100%_65%,50%_100%,0_65%)]"
        />
        <button aria-label="Zoom in" onClick={() => setZoom(Math.min(200, zoom + 10))}>
          <svg className="h-8 w-[26px]" viewBox="0 0 26 32" aria-hidden="true">
            <ellipse cx="13" cy="16" rx="12" ry="15" fill="#d8e7fa" stroke="#56749f" strokeWidth="1.5" />
            <path d="M7 16h12M13 8v16" stroke="#4d5c74" strokeWidth="4" />
          </svg>
        </button>
      </div>
    </footer>
  );
}

export default function App() {
  return (
    <div className="relative flex h-screen flex-col overflow-hidden bg-[#bfdbff] font-['DejaVu_Sans_Condensed','DejaVu_Sans',sans-serif] text-[18px] leading-6">
      <TitleBar />
      <TabBar />
      <button aria-label="Office Button" className="absolute top-[6px] left-[6px]"><OfficeLogo /></button>
      <div className="mx-[2px] flex h-[180px] shrink-0 gap-[6px] rounded-[5px] border border-[#8fb0dd] bg-linear-to-b from-[#dfe9f5] via-[#cbdbef] via-25% to-[#e2f6ff] p-1">
        <ClipboardGroup />
        <FontGroup />
        <ParagraphGroup />
        <StylesGroup />
        <EditingGroup />
      </div>
      <Workspace />
      <StatusBar />
    </div>
  );
}
